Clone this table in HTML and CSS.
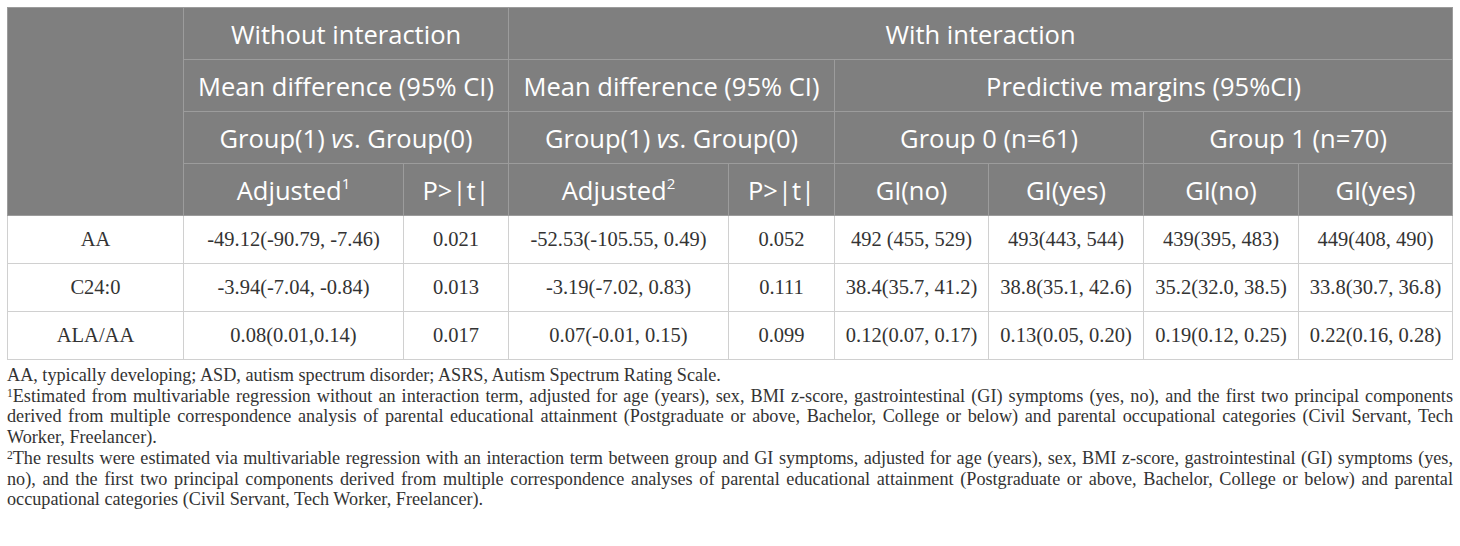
FILE: index.html
```html
<!DOCTYPE html>
<html lang="en">
<head>
<meta charset="utf-8">
<title>Table</title>
<link rel="stylesheet" href="styles.css">
</head>
<body>
<div class="page">
  <table class="data">
    <colgroup>
      <col class="c-label">
      <col class="c-adj">
      <col class="c-p">
      <col class="c-adj">
      <col class="c-p2">
      <col class="c-gi">
      <col class="c-gi2">
      <col class="c-gi2">
      <col class="c-gi">
    </colgroup>
    <thead>
      <tr>
        <th rowspan="4"></th>
        <th colspan="2">Without interaction</th>
        <th colspan="6">With interaction</th>
      </tr>
      <tr>
        <th colspan="2">Mean difference (95% CI)</th>
        <th colspan="2">Mean difference (95% CI)</th>
        <th colspan="4">Predictive margins (95%CI)</th>
      </tr>
      <tr>
        <th colspan="2">Group(1) <i>vs</i>. Group(0)</th>
        <th colspan="2">Group(1) <i>vs</i>. Group(0)</th>
        <th colspan="2">Group 0 (n=61)</th>
        <th colspan="2">Group 1 (n=70)</th>
      </tr>
      <tr>
        <th>Adjusted<sup>1</sup></th>
        <th>P&gt;|t|</th>
        <th>Adjusted<sup>2</sup></th>
        <th>P&gt;|t|</th>
        <th>GI(no)</th>
        <th>GI(yes)</th>
        <th>GI(no)</th>
        <th>GI(yes)</th>
      </tr>
    </thead>
    <tbody>
      <tr>
        <td>AA</td>
        <td>-49.12(-90.79, -7.46)</td>
        <td>0.021</td>
        <td>-52.53(-105.55, 0.49)</td>
        <td>0.052</td>
        <td>492 (455, 529)</td>
        <td>493(443, 544)</td>
        <td>439(395, 483)</td>
        <td>449(408, 490)</td>
      </tr>
      <tr>
        <td>C24:0</td>
        <td>-3.94(-7.04, -0.84)</td>
        <td>0.013</td>
        <td>-3.19(-7.02, 0.83)</td>
        <td>0.111</td>
        <td>38.4(35.7, 41.2)</td>
        <td>38.8(35.1, 42.6)</td>
        <td>35.2(32.0, 38.5)</td>
        <td>33.8(30.7, 36.8)</td>
      </tr>
      <tr>
        <td>ALA/AA</td>
        <td>0.08(0.01,0.14)</td>
        <td>0.017</td>
        <td>0.07(-0.01, 0.15)</td>
        <td>0.099</td>
        <td>0.12(0.07, 0.17)</td>
        <td>0.13(0.05, 0.20)</td>
        <td>0.19(0.12, 0.25)</td>
        <td>0.22(0.16, 0.28)</td>
      </tr>
    </tbody>
  </table>
  <div class="notes">
    <p>AA, typically developing; ASD, autism spectrum disorder; ASRS, Autism Spectrum Rating Scale.</p>
    <p><sup>1</sup>Estimated from multivariable regression without an interaction term, adjusted for age (years), sex, BMI z-score, gastrointestinal (GI) symptoms (yes, no), and the first two principal components derived from multiple correspondence analysis of parental educational attainment (Postgraduate or above, Bachelor, College or below) and parental occupational categories (Civil Servant, Tech Worker, Freelancer).</p>
    <p><sup>2</sup>The results were estimated via multivariable regression with an interaction term between group and GI symptoms, adjusted for age (years), sex, BMI z-score, gastrointestinal (GI) symptoms (yes, no), and the first two principal components derived from multiple correspondence analyses of parental educational attainment (Postgraduate or above, Bachelor, College or below) and parental occupational categories (Civil Servant, Tech Worker, Freelancer).</p>
  </div>
</div>
</body>
</html>
```
FILE: styles.css
```css
html, body {
  margin: 0;
  padding: 0;
  background: #ffffff;
}

.page {
  padding: 7px 8px 0 7px;
}

.data {
  width: 1446px;
  border-collapse: collapse;
  table-layout: fixed;
}

.c-label { width: 176px; }
.c-adj { width: 220px; }
.c-p { width: 105px; }
.c-p2 { width: 106px; }
.c-gi { width: 154px; }
.c-gi2 { width: 155px; }

.data th {
  background: #7f7f7f;
  color: #ffffff;
  font-family: "Open Sans", "DejaVu Sans", sans-serif;
  font-weight: 400;
  font-size: 25.5px;
  line-height: 30px;
  height: 51px;
  padding: 0 2px;
  border: 1px solid #9c9c9c;
  text-align: center;
  vertical-align: middle;
  white-space: nowrap;
}

.data th sup {
  font-size: 15px;
  line-height: 0;
  vertical-align: 11px;
}

.data td {
  font-family: "Liberation Serif", "Times New Roman", serif;
  font-size: 20.5px;
  color: #333333;
  height: 47px;
  padding: 0 2px;
  border: 1px solid #d0d0d0;
  text-align: center;
  vertical-align: middle;
  white-space: nowrap;
}

.notes {
  width: 1446px;
  margin-top: 5px;
  font-family: "Liberation Serif", "Times New Roman", serif;
  font-size: 18.2px;
  line-height: 20.7px;
  color: #333333;
  text-align: justify;
}

.notes p {
  margin: 0;
}

.notes sup {
  font-size: 11.5px;
  line-height: 0;
  vertical-align: 5px;
}
```
